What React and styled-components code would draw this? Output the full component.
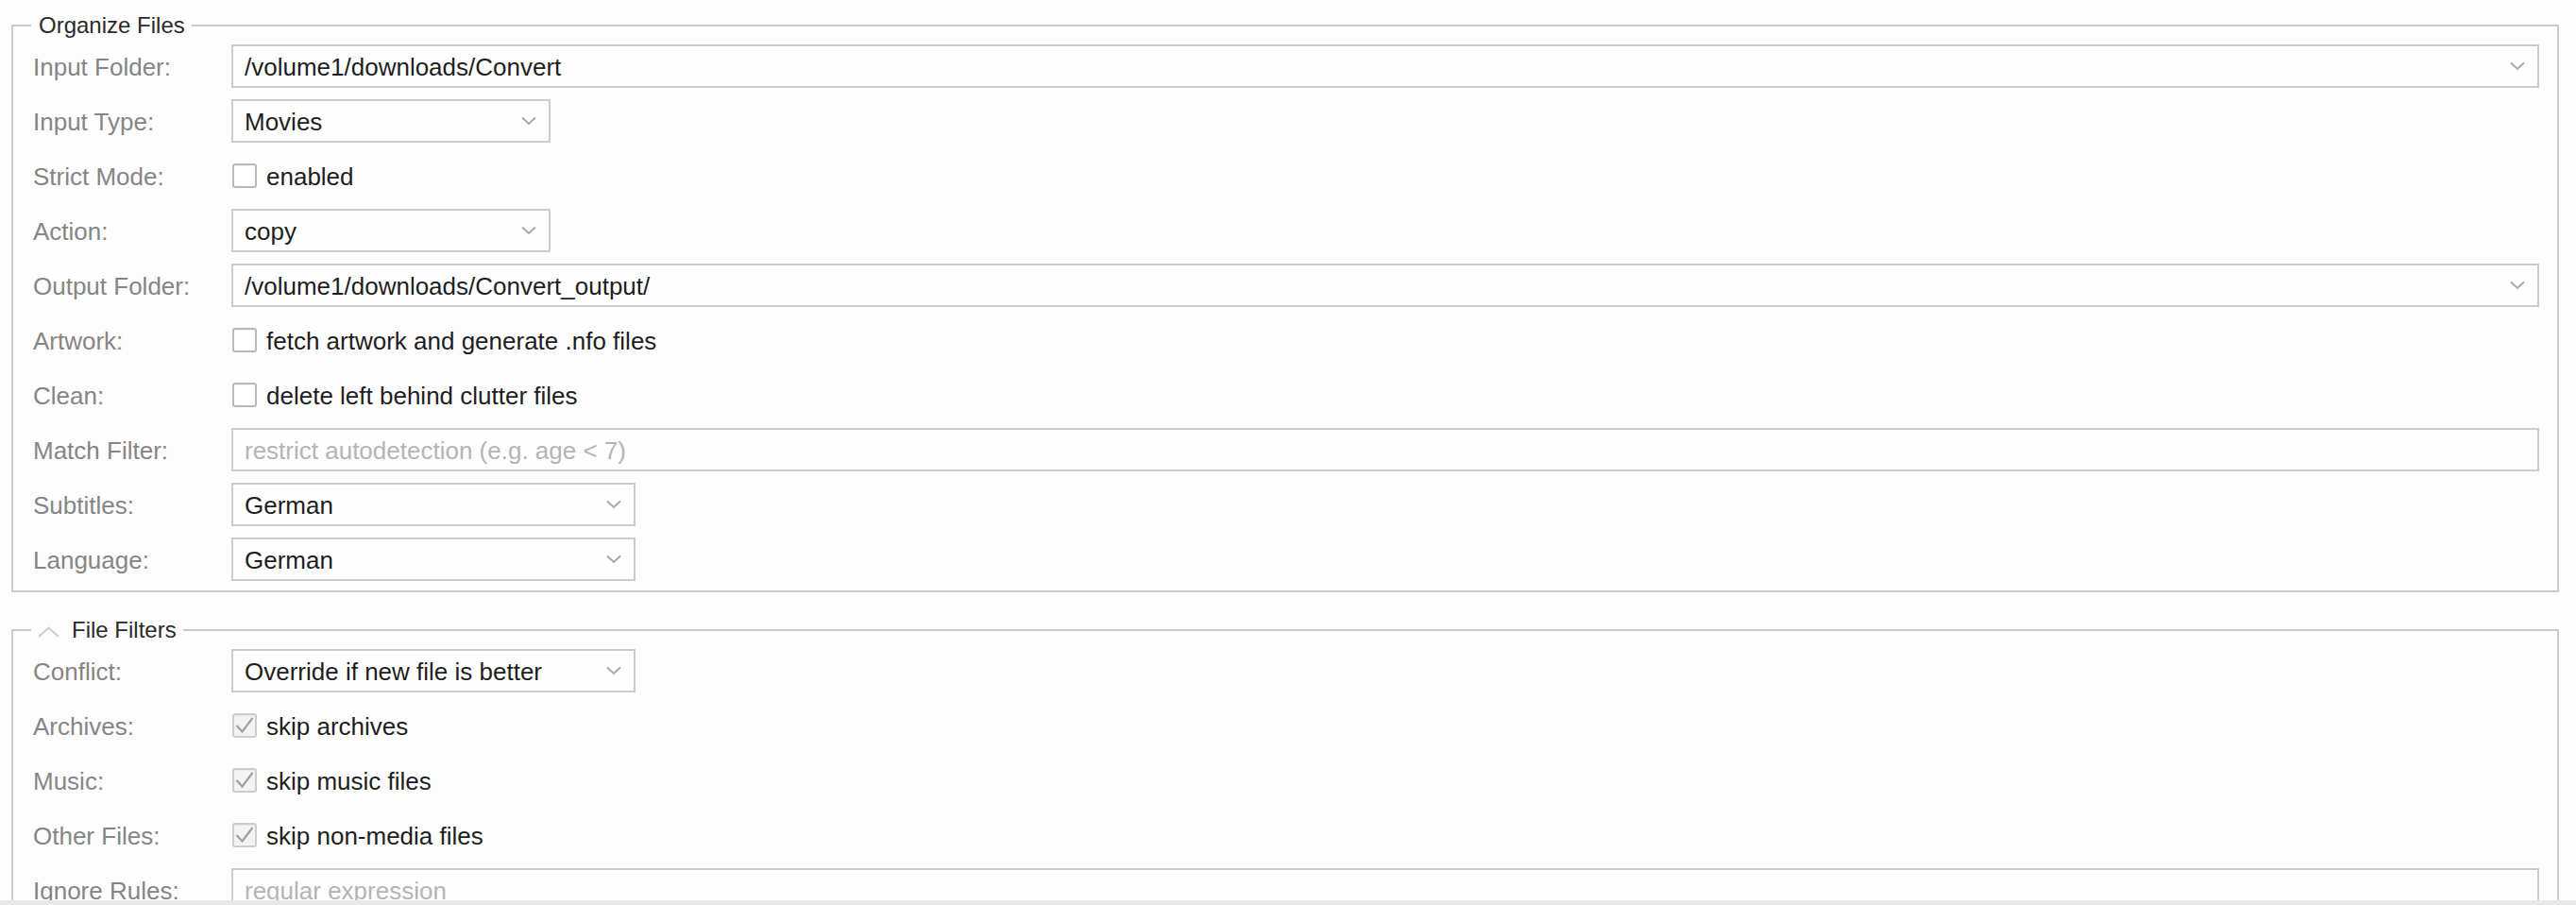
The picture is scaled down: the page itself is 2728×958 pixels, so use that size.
import React from 'react'
import styled, { createGlobalStyle } from 'styled-components'

const GlobalStyle = createGlobalStyle`
  html, body {
    margin: 0;
    padding: 0;
    background: #fdfdfd;
  }

  body {
    font-family: 'Liberation Sans', Arial, Helvetica, sans-serif;
    font-size: 26px;
    color: #1e1e1e;
  }
`

const Page = styled.div`
  height: 100vh;
  display: flex;
  flex-direction: column;
  overflow: hidden;
`

const Scroller = styled.div`
  flex: 1;
  overflow: hidden;
  padding: 13px 18px 0 12px;
`

const BottomBar = styled.div`
  height: 5px;
  flex: none;
  background: #e8e8e8;
`

const Fieldset = styled.fieldset`
  margin: ${({ $first }) => ($first ? '0' : '26px 0 0')};
  padding: 0 19px 4px 19px;
  border: 2px solid #cbcbcb;
  min-width: 0;
`

const Legend = styled.legend`
  padding: 0 7px 0 8px;
  font-size: 24px;
  line-height: 28px;
  color: #2a2a2a;
  display: flex;
  align-items: center;

  svg {
    margin: 4px 13px 0 -1px;
  }
`

const Row = styled.div`
  height: 58px;
  display: flex;
  align-items: center;
  padding-left: 2px;
`

const Label = styled.div`
  width: 210px;
  flex: none;
  padding-top: 2px;
  color: #858585;
  white-space: nowrap;
`

const Box = styled.div`
  box-sizing: border-box;
  height: 46px;
  width: ${({ $width }) => ($width ? `${$width}px` : 'auto')};
  flex: ${({ $width }) => ($width ? 'none' : '1')};
  border: 2px solid #cccccc;
  background: #fefefe;
  padding: 2px 12px 0;
  display: flex;
  align-items: center;
  justify-content: space-between;
  color: ${({ $placeholder }) => ($placeholder ? '#b4b4b4' : '#1e1e1e')};
  white-space: nowrap;
  overflow: hidden;
`

const Chevron = styled.svg`
  flex: none;
  margin: -2px 1px 0 0;
`

const CheckLine = styled.label`
  display: flex;
  align-items: center;
  gap: 10px;
  margin-left: 1px;
  color: #1e1e1e;

  span + span {
    padding-top: 2px;
  }
`

const Check = styled.span`
  box-sizing: border-box;
  width: 26px;
  height: 26px;
  border: 2px solid ${({ $checked }) => ($checked ? '#cdcdcd' : '#b9b9b9')};
  border-radius: 3px;
  background: ${({ $checked }) => ($checked ? '#f3f3f3' : '#ffffff')};
  box-shadow: inset 0 1px 1px rgba(0, 0, 0, 0.06);
  display: flex;
  align-items: center;
  justify-content: center;
`

function ChevronDown() {
  return (
    <Chevron width='16' height='10' viewBox='0 0 16 10'>
      <path d='M1 1.5 L8 8 L15 1.5' fill='none' stroke='#a8a8a8' strokeWidth='2' />
    </Chevron>
  )
}

function ChevronUp() {
  return (
    <svg width='23' height='12' viewBox='0 0 23 12'>
      <path d='M1 11 L11.5 1.5 L22 11' fill='none' stroke='#cfcfcf' strokeWidth='2' />
    </svg>
  )
}

function Select({ value, width }) {
  return (
    <Box $width={width}>
      <span>{value}</span>
      <ChevronDown />
    </Box>
  )
}

function TextInput({ placeholder }) {
  return <Box $placeholder>{placeholder}</Box>
}

function Checkbox({ checked, text }) {
  return (
    <CheckLine>
      <Check $checked={checked}>
        {checked && (
          <svg width='22' height='22' viewBox='0 0 22 22'>
            <path d='M2.5 11 L8.5 17.5 L19.5 3' fill='none' stroke='#a0a0a0' strokeWidth='2.2' />
          </svg>
        )}
      </Check>
      <span>{text}</span>
    </CheckLine>
  )
}

function Field({ label, children }) {
  return (
    <Row>
      <Label>{label}</Label>
      {children}
    </Row>
  )
}

export default function App() {
  return (
    <Page>
      <GlobalStyle />
      <Scroller>
        <Fieldset $first>
          <Legend>Organize Files</Legend>
          <Field label='Input Folder:'>
            <Select value='/volume1/downloads/Convert' />
          </Field>
          <Field label='Input Type:'>
            <Select value='Movies' width={338} />
          </Field>
          <Field label='Strict Mode:'>
            <Checkbox text='enabled' />
          </Field>
          <Field label='Action:'>
            <Select value='copy' width={338} />
          </Field>
          <Field label='Output Folder:'>
            <Select value='/volume1/downloads/Convert_output/' />
          </Field>
          <Field label='Artwork:'>
            <Checkbox text='fetch artwork and generate .nfo files' />
          </Field>
          <Field label='Clean:'>
            <Checkbox text='delete left behind clutter files' />
          </Field>
          <Field label='Match Filter:'>
            <TextInput placeholder='restrict autodetection (e.g. age < 7)' />
          </Field>
          <Field label='Subtitles:'>
            <Select value='German' width={428} />
          </Field>
          <Field label='Language:'>
            <Select value='German' width={428} />
          </Field>
        </Fieldset>

        <Fieldset>
          <Legend>
            <ChevronUp />
            File Filters
          </Legend>
          <Field label='Conflict:'>
            <Select value='Override if new file is better' width={428} />
          </Field>
          <Field label='Archives:'>
            <Checkbox checked text='skip archives' />
          </Field>
          <Field label='Music:'>
            <Checkbox checked text='skip music files' />
          </Field>
          <Field label='Other Files:'>
            <Checkbox checked text='skip non-media files' />
          </Field>
          <Field label='Ignore Rules:'>
            <TextInput placeholder='regular expression' />
          </Field>
        </Fieldset>
      </Scroller>
      <BottomBar />
    </Page>
  )
}
